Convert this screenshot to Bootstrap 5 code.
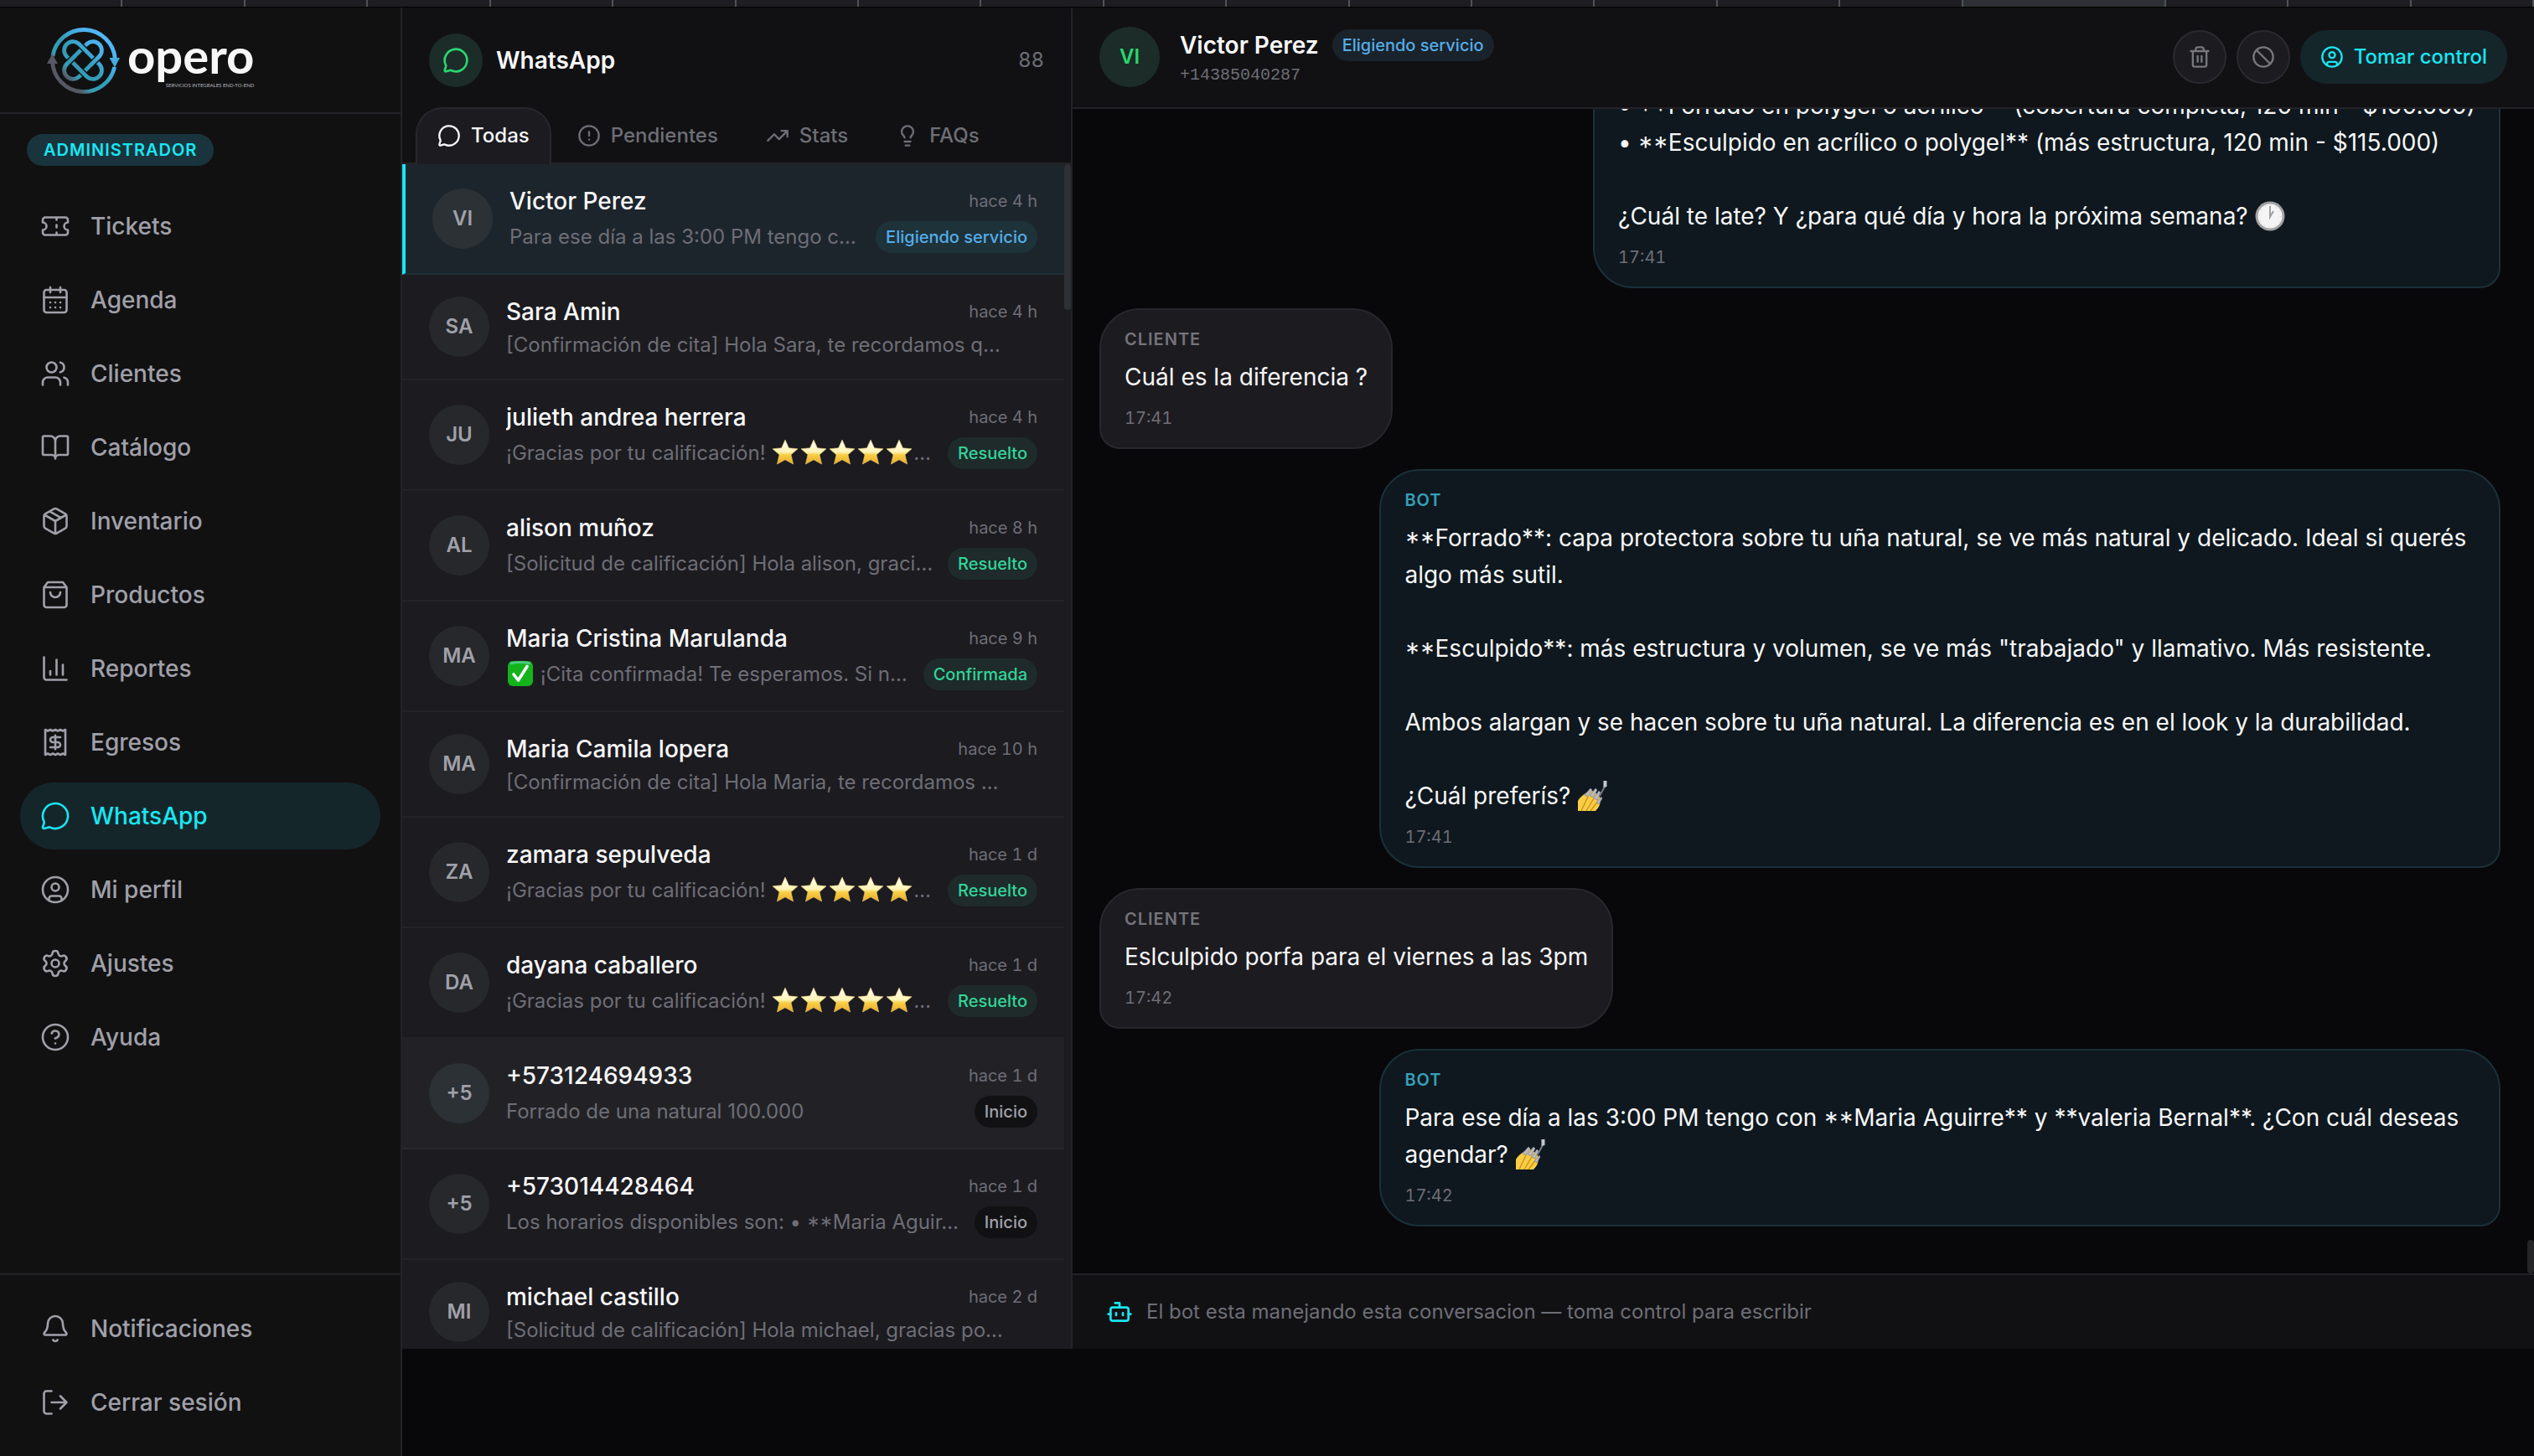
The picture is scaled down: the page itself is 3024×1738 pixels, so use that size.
<!DOCTYPE html>
<html lang="es">
<head>
<meta charset="utf-8">
<meta name="viewport" content="width=device-width, initial-scale=1">
<title>Opero · WhatsApp</title>
<link href="https://cdn.jsdelivr.net/npm/bootstrap@5.3.0/dist/css/bootstrap.min.css" rel="stylesheet">
<style>
  :root {
    --bg: #08080a; --surface: #111113; --raised: #1c1b20; --line: #232327;
    --fg: #f7f7f8; --soft: #a0a0a9; --dim: #6e6e76; --cyan: #19e6f2; --green: #34d399;
  }
  body { background: var(--bg); color: var(--fg); font-family: Inter, "Noto Sans", sans-serif; font-size: 24px; line-height: 32px; }
  a { color: inherit; text-decoration: none; }
  button { color: inherit; background: none; border: 0; padding: 0; text-align: left; }
  .ico { fill: none; stroke: currentColor; stroke-width: 2; stroke-linecap: round; stroke-linejoin: round; width: 28px; height: 28px; flex: none; }
  .tabular { font-variant-numeric: tabular-nums; }
  .caps-mark { font-feature-settings: "case" 1; }

  .window-tabs { height: 8px; background: #1d1d22; }
  .window-tabs i { flex: 1 1 0; border-right: 2px solid #505258; }
  .window-tabs i.current { flex: 0 0 8%; background: #2d3136; }
  .shell { height: calc(100vh - 8px); border-top: 1px solid #000; }

  .side { width: 480px; flex: none; background: #111112; border-right: 2px solid var(--line); }
  .brand { height: 127px; padding: 21px 0 0 54px; border-bottom: 2px solid var(--line); }
  .brand svg { width: 90px; height: 86px; flex: none; }
  .brand-text { padding: 6px 0 0 8px; }
  .brand-name { font: 700 58px/60px Lato, sans-serif; }
  .brand-sub { font: 400 6px/12px Lato, sans-serif; color: #b9b9bf; }
  .role { margin: 24px 0 32px 32px; padding: 4px 20px; border-radius: 19px; background: #1a343d; color: var(--cyan); font-size: 20px; line-height: 30px; font-weight: 600; letter-spacing: 1px; }
  .menu { gap: 8px; padding: 0 24px; }
  .menu a { height: 80px; padding: 0 24px; gap: 24px; border-radius: 40px; color: var(--soft); font-size: 28px; font-weight: 500; }
  .menu a.current { background: #15262b; color: var(--cyan); }
  .menu .ico { width: 36px; height: 36px; stroke-width: 1.75; }
  .menu-foot { border-top: 2px solid var(--line); padding: 24px; }

  .work { padding-bottom: 128px; }
  .inbox { width: 800px; flex: none; background: var(--raised); border-right: 2px solid var(--line); }
  .inbox-top { background: var(--surface); }
  .inbox-title { padding: 31px 32px 24px; gap: 16px; }
  .inbox-title h1 { font-size: 28px; line-height: 40px; font-weight: 600; margin: 0; }
  .total { color: var(--dim); }
  .wa-mark { width: 64px; height: 64px; background: #1c2c29; color: #2bd66f; }
  .wa-mark .ico { width: 32px; height: 32px; }
  .views { padding: 0 16px; gap: 5px; box-shadow: inset 0 -2px var(--line); }
  .views button { height: 68px; padding: 0 24px 2px; gap: 12px; border: 2px solid transparent; border-bottom: 0; border-radius: 32px 32px 0 0; color: var(--dim); font-weight: 500; }
  .views button.current { background: var(--raised); border-color: #27272c; color: var(--fg); }

  .threads { overflow: hidden; }
  .thread { padding: 24px 32px; gap: 20px; width: 100%; border-bottom: 2px solid #232327; }
  .thread.open { background: #1d252c; border-left: 4px solid var(--cyan); border-bottom-color: #1d3138; }
  .thread.hovered { background: #222226; border-bottom-color: #29292e; }
  .face { width: 72px; height: 72px; flex: none; background: #26282b; color: var(--soft); font-weight: 600; }
  .open .face, .hovered .face { background: #2b3135; }
  .who { font-size: 28px; line-height: 40px; font-weight: 500; }
  .when { font-size: 20px; color: var(--dim); }
  .snippet { color: var(--dim); white-space: nowrap; overflow: hidden; }
  .pill { flex: none; padding: 4px 12px; border-radius: 19px; font-size: 20px; line-height: 30px; font-weight: 500; }
  .pill-blue { background: #1e323a; color: #55aeea; }
  .pill-green { background: #1e2b2a; color: var(--green); }
  .pill-dark { background: #111113; color: var(--soft); }
  .thumb { width: 8px; flex: none; border-radius: 4px; background: #2d3136; }
  .thumb-inbox { height: 174px; }
  .emo { width: 30px; height: 30px; margin: -4px 2px 0; }
  .emo-lg { width: 36px; height: 36px; margin-top: -4px; }

  .chat-top { background: var(--surface); border-bottom: 2px solid var(--line); padding: 23px 32px 24px; gap: 24px; }
  .chat-top .face { background: #1c2c29; color: #2bd66f; }
  .chat-top h2 { font-size: 28px; line-height: 40px; font-weight: 600; margin: 0; }
  .chat-top .pill-blue { background: #1a232b; }
  .contact { padding-top: 2px; margin-bottom: -2px; }
  .phone { font: 20px/32px "Liberation Mono", monospace; color: var(--dim); }
  .tools { gap: 12px; }
  .round { width: 64px; height: 64px; border: 2px solid #2a2a2f; background: var(--raised); color: #77777e; }
  .take { height: 64px; padding: 0 24px; gap: 12px; border-radius: 32px; background: #15262b; color: var(--cyan); font-weight: 500; }
  .stream { overflow: hidden; }
  .log { padding: 24px 32px 56px; gap: 24px; }
  .bubble { max-width: 80%; flex: none; padding: 20px 28px; border: 2px solid #27272c; background: var(--raised); border-radius: 48px 48px 48px 24px; font-size: 28px; line-height: 44px; }
  .bubble.bot { background: #0e181e; border-color: #1a3139; border-radius: 48px 48px 24px 48px; }
  .from { font-size: 20px; line-height: 30px; font-weight: 600; letter-spacing: 1px; color: #74747b; margin-bottom: 8px; }
  .bot .from { color: #369fba; }
  .said { white-space: pre-line; margin: 0 0 12px; }
  .stamp { font-size: 20px; line-height: 30px; color: var(--dim); }
  .thumb-chat { height: 40px; background: #252528; }
  .notice { height: 90px; flex: none; border-top: 2px solid var(--line); background: var(--surface); padding: 0 40px; gap: 16px; color: var(--dim); }
  .notice .ico { width: 32px; height: 32px; color: var(--cyan); }
</style>
</head>
<body class="overflow-hidden">

<svg class="position-absolute" width="0" height="0" aria-hidden="true">
  <linearGradient id="gStar" x1="0" y1="0" x2="0" y2="1"><stop offset="0" stop-color="#fff"/><stop offset=".5" stop-color="#fdf3b4"/><stop offset=".62" stop-color="#f8cf45"/><stop offset="1" stop-color="#e9a92c"/></linearGradient>
  <symbol id="star" viewBox="0 0 30 30"><path d="M15 0l4.400 9.800 10.600 1-8 7 2.600 11.200L15 23.800 5.400 29l2.600-11.200-8-7 10.600-1z" fill="url(#gStar)" stroke="#e8c96a" stroke-width=".6"/></symbol>
  <symbol id="check" viewBox="0 0 30 30"><rect x="0" y="0" width="30" height="30" rx="6" fill="#14b31c"/><path d="M3 3q12-3 24 0" stroke="#4ccb80" stroke-width="3" fill="none"/><path d="M7 16l5.500 7L23 6.500" stroke="#fff" stroke-width="3.600" fill="none" stroke-linecap="round" stroke-linejoin="round"/></symbol>
  <symbol id="clock" viewBox="0 0 36 36"><circle cx="18" cy="18" r="17.500" fill="#a3a3a5"/><circle cx="18" cy="18" r="14.500" fill="#f4f4f4"/><circle cx="18" cy="18" r="12.500" fill="none" stroke="#c4c4c4" stroke-width="1" stroke-dasharray="1 5.540"/><path d="M18 6v13l4-7" fill="none" stroke="#9a9a9a" stroke-width="1.800"/></symbol>
  <symbol id="nails" viewBox="0 0 36 36"><path d="M1 36V24c2-4 6-7 9-9l6-4 4 2 4 3 3 3 1 4c0 5-2 9-6 13z" fill="#f9cd45"/><path d="M5 36l8-17M11 36l9-15M16 36l9-12" stroke="#c98f1d" stroke-width="1.300" fill="none"/><path d="M9 17l7-8 2 2-5 8zM15 18l7-9 2 2-5 9zM20 21l6-9 2 2-4 9zM23 26l6-7 1 2-4 7z" fill="#b9bac4" stroke="#81828d" stroke-width=".7"/><path d="M27 18L33 7" stroke="#777986" stroke-width="2"/><path d="M31.500 0h4v7l-4 1z" fill="#c6c7ce"/></symbol>
  <symbol id="bubble" viewBox="0 0 24 24"><path d="M2.992 16.342a2 2 0 0 1 .094 1.167l-1.065 3.290a1 1 0 0 0 1.236 1.168l3.413-.998a2 2 0 0 1 1.099.092 10 10 0 1 0-4.777-4.719"/></symbol>
  <symbol id="user" viewBox="0 0 24 24"><circle cx="12" cy="12" r="10"/><circle cx="12" cy="10" r="3"/><path d="M7 20.662V19a2 2 0 0 1 2-2h6a2 2 0 0 1 2 2v1.662"/></symbol>
</svg>

<div class="window-tabs d-flex" aria-hidden="true"><i></i><i></i><i></i><i></i><i></i><i></i><i></i><i></i><i></i><i></i><i></i><i></i><i></i><i></i><i></i><i></i><i class="current"></i><i></i><i></i><i></i></div>

<div class="shell d-flex">
  <aside class="side d-flex flex-column">
    <div class="brand d-flex">
      <svg viewBox="54 29 90 86" fill="none" role="img" aria-label="Logotipo de Opero">
        <defs><linearGradient id="gLogo" gradientUnits="userSpaceOnUse" x1="130" y1="42" x2="70" y2="102"><stop offset="0" stop-color="#55b8fb"/><stop offset=".25" stop-color="#4bb0ea"/><stop offset=".5" stop-color="#329db8"/><stop offset=".72" stop-color="#379bb3"/><stop offset=".84" stop-color="#565863"/><stop offset="1" stop-color="#565863"/></linearGradient></defs>
        <g stroke="url(#gLogo)" stroke-width="4.800">
          <path d="M62.900 66A37.500 37.500 0 0 1 137.300 69"/>
          <path d="M136.700 79A37.500 37.500 0 0 1 62.600 73"/>
        </g>
        <path d="M56 75l6.300-11.500L69 75z" fill="#565863"/><path d="M130.500 68h12.500l-6 11.500z" fill="#45abe0"/>
        <path d="M118.900 65.900L93.900 90.900A10.500 10.500 0 0 1 79.100 76.100L104.100 51.100A10.500 10.500 0 0 1 118.900 65.900Z" stroke="url(#gLogo)" stroke-width="4.800"/>
        <path d="M94.500 51.700l9 9M94.500 81.300l9 9" stroke="#111112" stroke-width="7.500"/>
        <path d="M93.900 51.100L118.900 76.100A10.500 10.500 0 0 1 104.100 90.900L79.100 65.900A10.500 10.500 0 0 1 93.900 51.100Z" stroke="url(#gLogo)" stroke-width="4.800"/>
        <path d="M117.800 67l-8 8M88.200 67l-8 8" stroke="#111112" stroke-width="7.500"/>
        <path d="M119.300 65.500l-11 11M89.700 65.500l-11 11" stroke="url(#gLogo)" stroke-width="4.800"/>
      </svg>
      <div class="brand-text d-flex flex-column align-items-end">
        <span class="brand-name">opero</span>
        <span class="brand-sub">SERVICIOS INTEGRALES END-TO-END</span>
      </div>
    </div>
    <span class="role align-self-start">ADMINISTRADOR</span>
    <nav class="menu d-flex flex-column flex-grow-1">
      <a href="#" class="d-flex align-items-center"><svg class="ico" viewBox="0 0 24 24"><path d="M2 9a3 3 0 0 1 0 6v2a2 2 0 0 0 2 2h16a2 2 0 0 0 2-2v-2a3 3 0 0 1 0-6V7a2 2 0 0 0-2-2H4a2 2 0 0 0-2 2ZM13 5v2M13 17v2M13 11v2"/></svg>Tickets</a>
      <a href="#" class="d-flex align-items-center"><svg class="ico" viewBox="0 0 24 24"><rect x="3" y="4" width="18" height="18" rx="2"/><path d="M8 2v4M16 2v4M3 10h18M8 14h.01M12 14h.01M16 14h.01M8 18h.01M12 18h.01M16 18h.01"/></svg>Agenda</a>
      <a href="#" class="d-flex align-items-center"><svg class="ico" viewBox="0 0 24 24"><circle cx="9" cy="7" r="4"/><path d="M16 21v-2a4 4 0 0 0-4-4H6a4 4 0 0 0-4 4v2M22 21v-2a4 4 0 0 0-3-3.870M16 3.130a4 4 0 0 1 0 7.750"/></svg>Clientes</a>
      <a href="#" class="d-flex align-items-center"><svg class="ico" viewBox="0 0 24 24"><path d="M12 7v14M3 18a1 1 0 0 1-1-1V4a1 1 0 0 1 1-1h5a4 4 0 0 1 4 4 4 4 0 0 1 4-4h5a1 1 0 0 1 1 1v13a1 1 0 0 1-1 1h-6a3 3 0 0 0-3 3 3 3 0 0 0-3-3z"/></svg>Catálogo</a>
      <a href="#" class="d-flex align-items-center"><svg class="ico" viewBox="0 0 24 24"><path d="M11 21.730a2 2 0 0 0 2 0l7-4A2 2 0 0 0 21 16V8a2 2 0 0 0-1-1.730l-7-4a2 2 0 0 0-2 0l-7 4A2 2 0 0 0 3 8v8a2 2 0 0 0 1 1.730zM12 22V12M3.300 7l8.700 5 8.700-5M7.500 4.270l9 5.150"/></svg>Inventario</a>
      <a href="#" class="d-flex align-items-center"><svg class="ico" viewBox="0 0 24 24"><path d="M6 2 3 6v14a2 2 0 0 0 2 2h14a2 2 0 0 0 2-2V6l-3-4ZM3 6h18M16 10a4 4 0 0 1-8 0"/></svg>Productos</a>
      <a href="#" class="d-flex align-items-center"><svg class="ico" viewBox="0 0 24 24"><path d="M3 3v16a2 2 0 0 0 2 2h16M18 17V9M13 17V5M8 17v-3"/></svg>Reportes</a>
      <a href="#" class="d-flex align-items-center"><svg class="ico" viewBox="0 0 24 24"><path d="M4 2v20l2-1 2 1 2-1 2 1 2-1 2 1 2-1 2 1V2l-2 1-2-1-2 1-2-1-2 1-2-1-2 1ZM16 8h-6a2 2 0 1 0 0 4h4a2 2 0 1 1 0 4H8M12 17.500v-11"/></svg>Egresos</a>
      <a href="#" class="current d-flex align-items-center" aria-current="page"><svg class="ico"><use href="#bubble"/></svg>WhatsApp</a>
      <a href="#" class="d-flex align-items-center"><svg class="ico"><use href="#user"/></svg>Mi perfil</a>
      <a href="#" class="d-flex align-items-center"><svg class="ico" viewBox="0 0 24 24"><path d="M9.671 4.136a2.340 2.340 0 0 1 4.659 0 2.340 2.340 0 0 0 3.319 1.915 2.340 2.340 0 0 1 2.330 4.033 2.340 2.340 0 0 0 0 3.831 2.340 2.340 0 0 1-2.330 4.033 2.340 2.340 0 0 0-3.319 1.915 2.340 2.340 0 0 1-4.659 0 2.340 2.340 0 0 0-3.320-1.915 2.340 2.340 0 0 1-2.330-4.033 2.340 2.340 0 0 0 0-3.831A2.340 2.340 0 0 1 6.350 6.051a2.340 2.340 0 0 0 3.319-1.915"/><circle cx="12" cy="12" r="3"/></svg>Ajustes</a>
      <a href="#" class="d-flex align-items-center"><svg class="ico" viewBox="0 0 24 24"><circle cx="12" cy="12" r="10"/><path d="M9.090 9a3 3 0 0 1 5.830 1c0 2-3 3-3 3M12 17h.01"/></svg>Ayuda</a>
    </nav>
    <nav class="menu menu-foot d-flex flex-column">
      <a href="#" class="d-flex align-items-center"><svg class="ico" viewBox="0 0 24 24"><path d="M10.268 21a2 2 0 0 0 3.464 0M3.262 15.326A1 1 0 0 0 4 17h16a1 1 0 0 0 .740-1.673C19.410 13.956 18 12.499 18 8A6 6 0 0 0 6 8c0 4.499-1.411 5.956-2.738 7.326"/></svg>Notificaciones</a>
      <a href="#" class="d-flex align-items-center"><svg class="ico" viewBox="0 0 24 24"><path d="M16 17l5-5-5-5M21 12H9M9 21H5a2 2 0 0 1-2-2V5a2 2 0 0 1 2-2h4"/></svg>Cerrar sesión</a>
    </nav>
  </aside>

  <main class="work d-flex flex-grow-1 overflow-hidden">
    <section class="inbox d-flex flex-column">
      <div class="inbox-top">
        <div class="inbox-title d-flex align-items-center">
          <span class="wa-mark rounded-circle d-flex align-items-center justify-content-center"><svg class="ico"><use href="#bubble"/></svg></span>
          <h1>WhatsApp</h1>
          <span class="total ms-auto tabular">88</span>
        </div>
        <div class="views d-flex">
          <button type="button" class="current d-flex align-items-center"><svg class="ico"><use href="#bubble"/></svg>Todas</button>
          <button type="button" class="d-flex align-items-center"><svg class="ico" viewBox="0 0 24 24"><circle cx="12" cy="12" r="10"/><path d="M12 8v4M12 16h.01"/></svg>Pendientes</button>
          <button type="button" class="d-flex align-items-center"><svg class="ico" viewBox="0 0 24 24"><path d="M16 7h6v6M22 7l-8.500 8.500-5-5L2 17"/></svg>Stats</button>
          <button type="button" class="d-flex align-items-center"><svg class="ico" viewBox="0 0 24 24"><path d="M15 14c.2-1 .7-1.700 1.500-2.500 1-.9 1.500-2.200 1.500-3.500A6 6 0 0 0 6 8c0 1 .2 2.200 1.500 3.500.7.7 1.300 1.500 1.500 2.500M9 18h6M10 22h4"/></svg>FAQs</button>
        </div>
      </div>
      <div class="threads d-flex flex-grow-1">
        <div class="flex-grow-1 overflow-hidden">
          <button type="button" class="thread open d-flex align-items-center">
            <span class="face rounded-circle d-flex align-items-center justify-content-center">VI</span>
            <span class="flex-grow-1 d-flex flex-column gap-1 overflow-hidden">
              <span class="d-flex justify-content-between align-items-center"><span class="who">Victor Perez</span><span class="when tabular">hace 4 h</span></span>
              <span class="d-flex justify-content-between align-items-center gap-2"><span class="snippet">Para ese día a las 3:00 PM tengo c…</span><span class="pill pill-blue">Eligiendo servicio</span></span>
            </span>
          </button>
          <button type="button" class="thread d-flex align-items-center">
            <span class="face rounded-circle d-flex align-items-center justify-content-center">SA</span>
            <span class="flex-grow-1 d-flex flex-column gap-1 overflow-hidden">
              <span class="d-flex justify-content-between align-items-center"><span class="who">Sara Amin</span><span class="when tabular">hace 4 h</span></span>
              <span class="snippet">[Confirmación de cita] Hola Sara, te recordamos q…</span>
            </span>
          </button>
          <button type="button" class="thread d-flex align-items-center">
            <span class="face rounded-circle d-flex align-items-center justify-content-center">JU</span>
            <span class="flex-grow-1 d-flex flex-column gap-1 overflow-hidden">
              <span class="d-flex justify-content-between align-items-center"><span class="who">julieth andrea herrera</span><span class="when tabular">hace 4 h</span></span>
              <span class="d-flex justify-content-between align-items-center gap-2"><span class="snippet">¡Gracias por tu calificación! <svg class="emo"><use href="#star"/></svg><svg class="emo"><use href="#star"/></svg><svg class="emo"><use href="#star"/></svg><svg class="emo"><use href="#star"/></svg><svg class="emo"><use href="#star"/></svg>…</span><span class="pill pill-green">Resuelto</span></span>
            </span>
          </button>
          <button type="button" class="thread d-flex align-items-center">
            <span class="face rounded-circle d-flex align-items-center justify-content-center">AL</span>
            <span class="flex-grow-1 d-flex flex-column gap-1 overflow-hidden">
              <span class="d-flex justify-content-between align-items-center"><span class="who">alison muñoz</span><span class="when tabular">hace 8 h</span></span>
              <span class="d-flex justify-content-between align-items-center gap-2"><span class="snippet">[Solicitud de calificación] Hola alison, graci…</span><span class="pill pill-green">Resuelto</span></span>
            </span>
          </button>
          <button type="button" class="thread d-flex align-items-center">
            <span class="face rounded-circle d-flex align-items-center justify-content-center">MA</span>
            <span class="flex-grow-1 d-flex flex-column gap-1 overflow-hidden">
              <span class="d-flex justify-content-between align-items-center"><span class="who">Maria Cristina Marulanda</span><span class="when tabular">hace 9 h</span></span>
              <span class="d-flex justify-content-between align-items-center gap-2"><span class="snippet"><svg class="emo"><use href="#check"/></svg> ¡Cita confirmada! Te esperamos. Si n…</span><span class="pill pill-green">Confirmada</span></span>
            </span>
          </button>
          <button type="button" class="thread d-flex align-items-center">
            <span class="face rounded-circle d-flex align-items-center justify-content-center">MA</span>
            <span class="flex-grow-1 d-flex flex-column gap-1 overflow-hidden">
              <span class="d-flex justify-content-between align-items-center"><span class="who">Maria Camila lopera</span><span class="when tabular">hace 10 h</span></span>
              <span class="snippet">[Confirmación de cita] Hola Maria, te recordamos …</span>
            </span>
          </button>
          <button type="button" class="thread d-flex align-items-center">
            <span class="face rounded-circle d-flex align-items-center justify-content-center">ZA</span>
            <span class="flex-grow-1 d-flex flex-column gap-1 overflow-hidden">
              <span class="d-flex justify-content-between align-items-center"><span class="who">zamara sepulveda</span><span class="when tabular">hace 1 d</span></span>
              <span class="d-flex justify-content-between align-items-center gap-2"><span class="snippet">¡Gracias por tu calificación! <svg class="emo"><use href="#star"/></svg><svg class="emo"><use href="#star"/></svg><svg class="emo"><use href="#star"/></svg><svg class="emo"><use href="#star"/></svg><svg class="emo"><use href="#star"/></svg>…</span><span class="pill pill-green">Resuelto</span></span>
            </span>
          </button>
          <button type="button" class="thread d-flex align-items-center">
            <span class="face rounded-circle d-flex align-items-center justify-content-center">DA</span>
            <span class="flex-grow-1 d-flex flex-column gap-1 overflow-hidden">
              <span class="d-flex justify-content-between align-items-center"><span class="who">dayana caballero</span><span class="when tabular">hace 1 d</span></span>
              <span class="d-flex justify-content-between align-items-center gap-2"><span class="snippet">¡Gracias por tu calificación! <svg class="emo"><use href="#star"/></svg><svg class="emo"><use href="#star"/></svg><svg class="emo"><use href="#star"/></svg><svg class="emo"><use href="#star"/></svg><svg class="emo"><use href="#star"/></svg>…</span><span class="pill pill-green">Resuelto</span></span>
            </span>
          </button>
          <button type="button" class="thread hovered d-flex align-items-center">
            <span class="face rounded-circle d-flex align-items-center justify-content-center">+5</span>
            <span class="flex-grow-1 d-flex flex-column gap-1 overflow-hidden">
              <span class="d-flex justify-content-between align-items-center"><span class="who">+573124694933</span><span class="when tabular">hace 1 d</span></span>
              <span class="d-flex justify-content-between align-items-center gap-2"><span class="snippet">Forrado de una natural 100.000</span><span class="pill pill-dark">Inicio</span></span>
            </span>
          </button>
          <button type="button" class="thread d-flex align-items-center">
            <span class="face rounded-circle d-flex align-items-center justify-content-center">+5</span>
            <span class="flex-grow-1 d-flex flex-column gap-1 overflow-hidden">
              <span class="d-flex justify-content-between align-items-center"><span class="who">+573014428464</span><span class="when tabular">hace 1 d</span></span>
              <span class="d-flex justify-content-between align-items-center gap-2"><span class="snippet">Los horarios disponibles son: • <span class="caps-mark">**</span>Maria Aguir…</span><span class="pill pill-dark">Inicio</span></span>
            </span>
          </button>
          <button type="button" class="thread d-flex align-items-center">
            <span class="face rounded-circle d-flex align-items-center justify-content-center">MI</span>
            <span class="flex-grow-1 d-flex flex-column gap-1 overflow-hidden">
              <span class="d-flex justify-content-between align-items-center"><span class="who">michael castillo</span><span class="when tabular">hace 2 d</span></span>
              <span class="snippet">[Solicitud de calificación] Hola michael, gracias po…</span>
            </span>
          </button>
        </div>
        <div class="thumb thumb-inbox"></div>
      </div>
    </section>

    <section class="d-flex flex-column flex-grow-1 overflow-hidden">
      <header class="chat-top d-flex align-items-center">
        <span class="face rounded-circle d-flex align-items-center justify-content-center">VI</span>
        <div class="contact flex-grow-1">
          <div class="d-flex align-items-center gap-3"><h2>Victor Perez</h2><span class="pill pill-blue">Eligiendo servicio</span></div>
          <div class="phone">+14385040287</div>
        </div>
        <div class="tools d-flex">
          <button type="button" class="round rounded-circle d-flex align-items-center justify-content-center" aria-label="Eliminar"><svg class="ico" viewBox="0 0 24 24"><path d="M10 11v6M14 11v6M19 6v14a2 2 0 0 1-2 2H7a2 2 0 0 1-2-2V6M3 6h18M8 6V4a2 2 0 0 1 2-2h4a2 2 0 0 1 2 2v2"/></svg></button>
          <button type="button" class="round rounded-circle d-flex align-items-center justify-content-center" aria-label="Bloquear"><svg class="ico" viewBox="0 0 24 24"><circle cx="12" cy="12" r="10"/><path d="M4.929 4.929 19.070 19.071"/></svg></button>
          <button type="button" class="take d-flex align-items-center"><svg class="ico"><use href="#user"/></svg>Tomar control</button>
        </div>
      </header>
      <div class="stream d-flex flex-grow-1">
        <div class="log d-flex flex-column justify-content-end flex-grow-1">
          <article class="bubble bot align-self-end">
            <div class="from">BOT</div>
            <p class="said">• <span class="caps-mark">**</span>Forrado en polygel o acrílico** (cobertura completa, 120 min - $100.000)
• <span class="caps-mark">**</span>Esculpido en acrílico o polygel** (más estructura, 120 min - $115.000)

¿Cuál te late? Y ¿para qué día y hora la próxima semana? <svg class="emo-lg"><use href="#clock"/></svg></p>
            <div class="stamp tabular">17:41</div>
          </article>
          <article class="bubble align-self-start">
            <div class="from">CLIENTE</div>
            <p class="said">Cuál es la diferencia ?</p>
            <div class="stamp tabular">17:41</div>
          </article>
          <article class="bubble bot align-self-end">
            <div class="from">BOT</div>
            <p class="said"><span class="caps-mark">**</span>Forrado**: capa protectora sobre tu uña natural, se ve más natural y delicado. Ideal si querés algo más sutil.

<span class="caps-mark">**</span>Esculpido**: más estructura y volumen, se ve más "trabajado" y llamativo. Más resistente.

Ambos alargan y se hacen sobre tu uña natural. La diferencia es en el look y la durabilidad.

¿Cuál preferís? <svg class="emo-lg"><use href="#nails"/></svg></p>
            <div class="stamp tabular">17:41</div>
          </article>
          <article class="bubble align-self-start">
            <div class="from">CLIENTE</div>
            <p class="said">Eslculpido porfa para el viernes a las 3pm</p>
            <div class="stamp tabular">17:42</div>
          </article>
          <article class="bubble bot align-self-end">
            <div class="from">BOT</div>
            <p class="said">Para ese día a las 3:00 PM tengo con <span class="caps-mark">**</span>Maria Aguirre** y **valeria Bernal**. ¿Con cuál deseas agendar? <svg class="emo-lg"><use href="#nails"/></svg></p>
            <div class="stamp tabular">17:42</div>
          </article>
        </div>
        <div class="thumb thumb-chat align-self-end"></div>
      </div>
      <footer class="notice d-flex align-items-center">
        <svg class="ico" viewBox="0 0 24 24"><path d="M12 8V4H8M2 14h2M20 14h2M15 13v2M9 13v2"/><rect x="4" y="8" width="16" height="12" rx="2"/></svg>
        <span>El bot esta manejando esta conversacion — toma control para escribir</span>
      </footer>
    </section>
  </main>
</div>
<script src="https://cdn.jsdelivr.net/npm/bootstrap@5.3.0/dist/js/bootstrap.bundle.min.js"></script>
</body>
</html>
